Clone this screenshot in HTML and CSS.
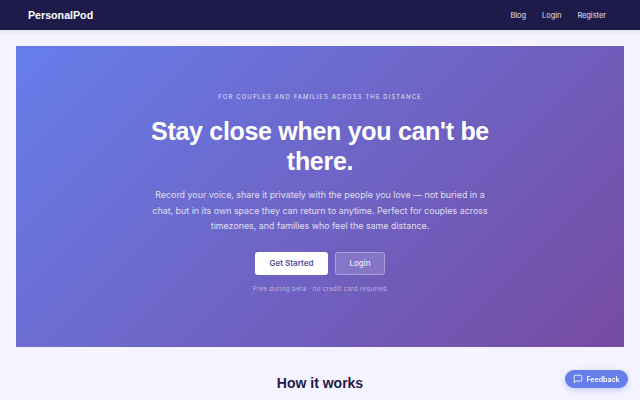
FILE: index.html
```html
<!DOCTYPE html>
<html lang="en">
<head>
<meta charset="utf-8">
<title>PersonalPod</title>
<link rel="stylesheet" href="styles.css">
</head>
<body>
<nav class="nav">
  <a class="logo" href="#">PersonalPod</a>
  <div class="nav-links">
    <a href="#">Blog</a>
    <a href="#">Login</a>
    <a href="#">Register</a>
  </div>
</nav>
<main class="main">
  <section class="hero">
    <p class="eyebrow">For couples and families across the distance</p>
    <h1>Stay close when you can't be there.</h1>
    <p class="lead">Record your voice, share it privately with the people you love — not buried in a chat, but in its own space they can return to anytime. Perfect for couples across timezones, and families who feel the same distance.</p>
    <div class="actions">
      <a class="btn btn-primary" href="#">Get Started</a>
      <a class="btn btn-ghost" href="#">Login</a>
    </div>
    <p class="note">Free during beta · no credit card required</p>
  </section>
  <h2 class="how">How it works</h2>
</main>
<button class="feedback" type="button">
  <svg viewBox="0 0 24 24" width="10" height="10" fill="none" stroke="currentColor" stroke-width="2" stroke-linecap="round" stroke-linejoin="round"><path d="M21 15a2 2 0 0 1-2 2H7l-4 4V5a2 2 0 0 1 2-2h14a2 2 0 0 1 2 2z"/></svg>
  Feedback
</button>
</body>
</html>
```
FILE: styles.css
```css
* { box-sizing: border-box; }
html, body { height: 100%; }
body {
  margin: 0;
  height: 400px;
  overflow: hidden;
  background: #f5f3ff;
  font-family: Inter, "Liberation Sans", sans-serif;
  color: #1e1b4b;
}
a { text-decoration: none; color: inherit; }
.nav {
  height: 30px;
  padding: 0 34px 0 28px;
  display: flex;
  align-items: center;
  justify-content: space-between;
  background: #1e1b4b;
  box-shadow: 0 1px 4px rgba(30, 27, 75, 0.12);
}
.logo {
  font-family: "Liberation Sans", Arial, sans-serif;
  font-weight: 700;
  font-size: 10.67px;
  color: #ffffff;
}
.nav-links {
  display: flex;
  gap: 16px;
  font-size: 7.4px;
  color: #e0e0ef;
}
.main { padding: 16px 16px 0; }
.hero {
  height: 301px;
  padding-top: 47px;
  display: flex;
  flex-direction: column;
  align-items: center;
  text-align: center;
  background: linear-gradient(135deg, #667eea 0%, #764ba2 100%);
  color: #ffffff;
}
.eyebrow {
  margin: 0;
  font-size: 6px;
  line-height: 8px;
  letter-spacing: 1.08px;
  text-transform: uppercase;
  color: rgba(255, 255, 255, 0.8);
}
h1 {
  margin: 15px 0 0;
  width: 400px;
  font-family: "Liberation Sans", Arial, sans-serif;
  font-size: 25px;
  line-height: 30px;
  font-weight: 700;
  letter-spacing: -0.3px;
}
.lead {
  margin: 11px 0 0;
  width: 352px;
  font-size: 8.9px;
  line-height: 15.5px;
  color: rgba(255, 255, 255, 0.8);
}
.actions {
  margin-top: 18px;
  display: flex;
  gap: 7px;
}
.btn {
  height: 23px;
  display: flex;
  align-items: center;
  justify-content: center;
  border-radius: 3px;
  font-size: 8px;
  font-weight: 600;
}
.btn-primary {
  width: 73px;
  background: #ffffff;
  color: #5a4a9c;
}
.btn-ghost {
  width: 50px;
  background: rgba(255, 255, 255, 0.15);
  border: 1px solid rgba(255, 255, 255, 0.3);
  color: rgba(255, 255, 255, 0.85);
  font-weight: 500;
}
.note {
  margin: 10px 0 0;
  font-size: 6px;
  line-height: 8px;
  letter-spacing: 0.42px;
  color: rgba(255, 255, 255, 0.55);
}
.how {
  margin: 28px 0 0;
  text-align: center;
  font-family: "Liberation Sans", Arial, sans-serif;
  font-size: 14px;
  line-height: 16px;
  font-weight: 700;
  color: #1e1b4b;
}
.feedback {
  position: fixed;
  right: 12px;
  bottom: 12px;
  height: 18px;
  width: 63px;
  padding: 0;
  display: flex;
  align-items: center;
  justify-content: center;
  gap: 3px;
  border: 0;
  border-radius: 9px;
  background: #667eea;
  color: #ffffff;
  font-family: Inter, sans-serif;
  font-size: 7px;
  font-weight: 600;
  box-shadow: 0 2px 6px rgba(102, 126, 234, 0.35);
}
```
